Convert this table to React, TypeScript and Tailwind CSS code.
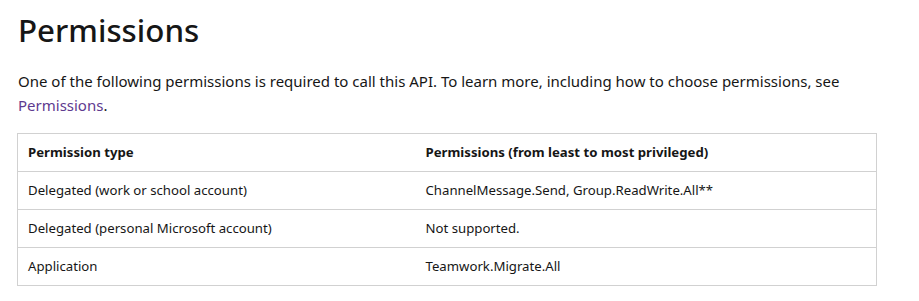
import React from "react";

const rows = [
  ["Delegated (work or school account)", "ChannelMessage.Send, Group.ReadWrite.All**"],
  ["Delegated (personal Microsoft account)", "Not supported."],
  ["Application", "Teamwork.Migrate.All"],
];

export default function App() {
  return (
    <div
      className="w-[919px] h-[301px] bg-white text-[#161616] pl-[17px] pr-[42px] overflow-hidden"
      style={{ fontFamily: '"Noto Sans", "Open Sans", sans-serif' }}
    >
      <h1 className="text-[31.3px] leading-[40px] font-medium pt-[10px] pl-[1px]">Permissions</h1>
      <p className="text-[15px] leading-[24px] mt-[19px] pl-[1px]">
        One of the following permissions is required to call this API. To learn more, including how to choose
        permissions, see <a className="text-[#5e3a8f]">Permissions</a>.
      </p>
      <table className="mt-[16px] w-[860px] border-collapse border border-[#d1d1d1] text-[13.2px]">
        <thead>
          <tr className="h-[38px]">
            <th className="text-left font-bold pl-[10px] w-[398px] border-b border-[#d1d1d1]">Permission type</th>
            <th className="text-left font-bold pl-[10px] border-b border-[#d1d1d1]">
              Permissions (from least to most privileged)
            </th>
          </tr>
        </thead>
        <tbody>
          {rows.map((r) => (
            <tr key={r[0]} className="h-[38px] border-b border-[#d1d1d1]">
              <td className="pl-[10px]">{r[0]}</td>
              <td className="pl-[10px]">{r[1]}</td>
            </tr>
          ))}
        </tbody>
      </table>
    </div>
  );
}
